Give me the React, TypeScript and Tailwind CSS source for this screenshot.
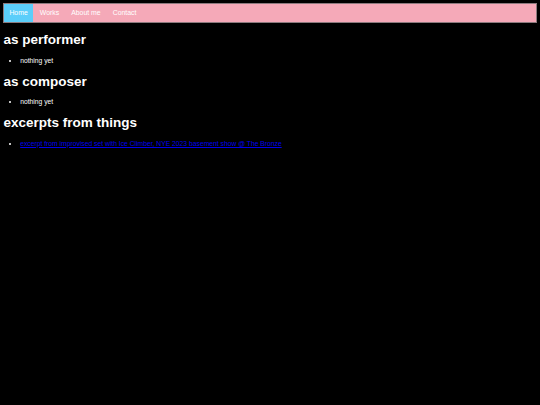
export default function App() {
  return (
    <div className="min-h-screen bg-black p-[3.4px] text-white" style={{ fontFamily: '"Liberation Sans", Arial, sans-serif' }}>
      <nav className="flex h-[20px] items-stretch gap-[2px] border border-[#8c7a7e] bg-[#f5a9b8] text-[6.9px] text-white">
        <a className="flex items-center bg-[#5bcefa] px-[5px]">Home</a>
        <a className="flex items-center px-[5px]">Works</a>
        <a className="flex items-center px-[5px]">About me</a>
        <a className="flex items-center px-[5px]">Contact</a>
      </nav>
      <h1 className="my-[9px] text-[13.5px] font-bold leading-[15.6px]">as performer</h1>
      <ul className="my-[6.8px] list-disc pl-[16.8px] text-[6.75px] leading-[7.8px]">
        <li>nothing yet</li>
      </ul>
      <h1 className="my-[9px] text-[13.5px] font-bold leading-[15.6px]">as composer</h1>
      <ul className="my-[6.8px] list-disc pl-[16.8px] text-[6.75px] leading-[7.8px]">
        <li>nothing yet</li>
      </ul>
      <h1 className="my-[9px] text-[13.5px] font-bold leading-[15.6px]">excerpts from things</h1>
      <ul className="my-[6.8px] list-disc pl-[16.8px] text-[6.75px] leading-[7.8px]">
        <li>
          <a className="text-[#0000ee] underline">excerpt from improvised set with Ice Climber, NYE 2023 basement show @ The Bronze</a>
        </li>
      </ul>
    </div>
  );
}
